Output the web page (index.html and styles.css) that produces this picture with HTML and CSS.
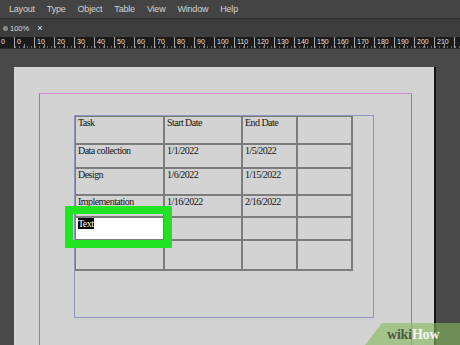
FILE: index.html
```html
<!DOCTYPE html>
<html lang="en">
<head>
  <meta charset="UTF-8" />
  <meta name="viewport" content="width=device-width, initial-scale=1.0" />
  <title>Table editing</title>
  <link rel="stylesheet" href="styles.css">
</head>
<body>

  <!-- menu -->
  <nav class="menubar">
    <span>Layout</span>
    <span>Type</span>
    <span>Object</span>
    <span>Table</span>
    <span>View</span>
    <span>Window</span>
    <span>Help</span>
  </nav>

  <div class="tabbar">
    <span class="tab"><span class="dot"></span>100%<span class="close">&times;</span></span>
  </div>

  <div class="ruler">
    <span class="first">0</span>
    <span>0</span><span>10</span><span>20</span><span>30</span><span>40</span><span>50</span>
    <span>60</span><span>70</span><span>80</span><span>90</span><span>100</span><span>110</span>
    <span>120</span><span>130</span><span>140</span><span>150</span><span>160</span><span>170</span>
    <span>180</span><span>190</span><span>200</span><span>210</span><span class="last"></span>
  </div>

  <main class="workspace">
    <div class="page">
      <div class="guides">
        <div class="frame">
          <div class="grid">
            <div class="cell">Task</div>
            <div class="cell">Start Date</div>
            <div class="cell">End Date</div>
            <div class="cell"></div>

            <div class="cell">Data collection</div>
            <div class="cell">1/1/2022</div>
            <div class="cell">1/5/2022</div>
            <div class="cell"></div>

            <div class="cell">Design</div>
            <div class="cell">1/6/2022</div>
            <div class="cell">1/15/2022</div>
            <div class="cell"></div>

            <div class="cell">Implementation</div>
            <div class="cell">1/16/2022</div>
            <div class="cell">2/16/2022</div>
            <div class="cell"></div>

            <div class="cell active"><span class="selected">Text</span><div class="highlight"></div></div>
            <div class="cell"></div>
            <div class="cell"></div>
            <div class="cell"></div>

            <div class="cell"></div>
            <div class="cell"></div>
            <div class="cell"></div>
            <div class="cell"></div>
          </div>
        </div>
      </div>
    </div>
  </main>

  <div class="logo"><span class="wiki">wiki</span><span class="how">How</span></div>

</body>
</html>
```

FILE: styles.css
```css
html, body {
  margin: 0;
  width: 460px;
  height: 345px;
  overflow: hidden;
}

body {
  position: relative;
  background: #494949;
  font-family: 'Liberation Sans', Arial, sans-serif;
}

/* menu bar */
.menubar {
  height: 19px;
  box-sizing: border-box;
  display: flex;
  align-items: center;
  gap: 12px;
  padding-left: 9px;
  background: #444444;
  border-bottom: 1px solid #2e2e2e;
  font-size: 9px;
  letter-spacing: -0.2px;
  color: #d2d2d2;
}

.tabbar {
  height: 18px;
  display: flex;
  align-items: center;
  background: #3d3d3d;
}

.tab {
  display: flex;
  align-items: center;
  padding-left: 3px;
  font-size: 7.5px;
  color: #dcdcdc;
}

.dot {
  width: 5px;
  height: 5px;
  border-radius: 50%;
  background: #8a8a8a;
  margin-right: 2px;
}

.close {
  margin-left: 8px;
  font-size: 9px;
  color: #e6e6e6;
}

/* ruler */
.ruler {
  height: 11px;
  display: flex;
  padding-left: 1px;
  background:
    repeating-linear-gradient(90deg, #6a6a6a 0 1px, transparent 1px 4px) left 15px bottom / 100% 2px no-repeat,
    repeating-linear-gradient(90deg, #8c8c8c 0 1px, transparent 1px 20px) left 24px bottom / 100% 4px no-repeat,
    #1b1b1b;
  border-bottom: 1px solid #2a2a2a;
  overflow: hidden;
  white-space: nowrap;
}

.ruler span {
  flex: 0 0 20px;
  box-sizing: border-box;
  border-left: 1px solid #a8a8a8;
  padding-left: 2px;
  font-size: 7px;
  line-height: 9px;
  color: #e2e2e2;
}

.ruler .first {
  flex-basis: 13px;
  border-left: 0;
  padding-left: 0;
}

.ruler .last {
  flex-basis: 6px;
}

/* document */
.workspace {
  padding: 18px 0 0 14px;
}

.page {
  width: 422px;
  height: 278px;
  background: #d3d3d3;
  border-right: 2px solid #141414;
  padding: 26px 0 0 25px;
  box-sizing: border-box;
  overflow: hidden;
}

.guides {
  width: 373px;
  height: 252px;
  box-sizing: border-box;
  border-top: 1px solid #d28ad0;
  border-left: 1px solid #8480d6;
  border-right: 1px solid #8480d6;
  padding: 21px 0 0 34px;
}

.frame {
  width: 300px;
  height: 203px;
  box-sizing: border-box;
  border: 1px solid #8e93c0;
}

.grid {
  display: grid;
  grid-template-columns: 87px 76px 53px 53px;
  grid-template-rows: 26px 22px 25px 20px 21px 28px;
  gap: 2px;
  padding: 1px 2px 2px 1px;
  width: fit-content;
  background: #7c7c7c;
}

.cell {
  background: #d3d3d3;
  padding: 0 0 0 2px;
  font-family: 'Liberation Serif', 'Times New Roman', serif;
  font-size: 10px;
  line-height: 11px;
  letter-spacing: -0.55px;
  color: #151515;
}

.cell.active {
  position: relative;
  background: #ffffff;
}

.selected {
  background: #000;
  color: #fff;
  padding-right: 1px;
}

.highlight {
  position: absolute;
  left: -11px;
  top: -12px;
  width: 107px;
  height: 42px;
  box-sizing: border-box;
  border: 8px solid #22e322;
  border-radius: 1px;
}

/* watermark */
.logo {
  position: absolute;
  right: 0;
  bottom: 0;
  width: 95px;
  height: 22px;
  padding-left: 22px;
  box-sizing: border-box;
  background: rgba(134, 186, 96, 0.62);
  clip-path: polygon(17px 0, 100% 0, 100% 100%, 0 100%);
  font-family: 'Liberation Serif', serif;
  font-weight: bold;
  font-size: 14px;
  line-height: 23px;
  letter-spacing: -0.2px;
}

.wiki {
  color: #4f5a48;
}

.how {
  color: #f4f4f0;
}
```
